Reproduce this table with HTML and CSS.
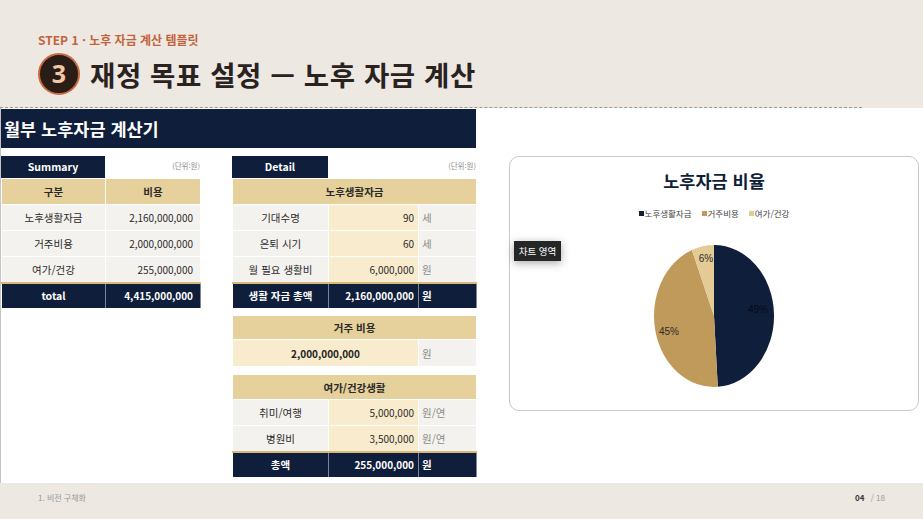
FILE: index.html
```html
<!DOCTYPE html>
<html lang="ko">
<head>
<meta charset="utf-8">
<title>재정 목표 설정 — 노후 자금 계산</title>
<link rel="stylesheet" href="styles.css">
</head>
<body>
<div class="page">
  <header class="head">
    <div class="step">STEP 1 · 노후 자금 계산 템플릿</div>
    <div class="title-row">
      <div class="num">3</div>
      <h1 class="title">재정 목표 설정 — 노후 자금 계산</h1>
    </div>
  </header>
  <div class="dash"></div>

  <main class="sheet">
    <div class="banner">월부 노후자금 계산기</div>
    <div class="content">
      <section class="tbl summary">
        <div class="cap"><div class="cap-title">Summary</div><div class="unit">(단위:원)</div></div>
        <table>
          <colgroup><col class="s1"><col class="s2"></colgroup>
          <tr class="gold"><th>구분</th><th>비용</th></tr>
          <tr class="row"><td class="c">노후생활자금</td><td class="r">2,160,000,000</td></tr>
          <tr class="row"><td class="c">거주비용</td><td class="r">2,000,000,000</td></tr>
          <tr class="row"><td class="c">여가/건강</td><td class="r">255,000,000</td></tr>
          <tr class="total"><td class="c">total</td><td class="r">4,415,000,000</td></tr>
        </table>
      </section>

      <section class="tbl detail">
        <div class="cap"><div class="cap-title">Detail</div><div class="unit">(단위:원)</div></div>
        <table>
          <colgroup><col class="d1"><col class="d2"><col class="d3"></colgroup>
          <tr class="gold"><th colspan="3">노후생활자금</th></tr>
          <tr class="row"><td class="c">기대수명</td><td class="r cream">90</td><td class="u">세</td></tr>
          <tr class="row"><td class="c">은퇴 시기</td><td class="r cream">60</td><td class="u">세</td></tr>
          <tr class="row"><td class="c">월 필요 생활비</td><td class="r cream">6,000,000</td><td class="u">원</td></tr>
          <tr class="total"><td class="c">생활 자금 총액</td><td class="r">2,160,000,000</td><td class="u">원</td></tr>
        </table>
        <table class="block2">
          <colgroup><col class="d1"><col class="d2"><col class="d3"></colgroup>
          <tr class="gold g2"><th colspan="3">거주 비용</th></tr>
          <tr class="row r2"><td colspan="2" class="c cream strong">2,000,000,000</td><td class="u">원</td></tr>
        </table>
        <table class="block3">
          <colgroup><col class="d1"><col class="d2"><col class="d3"></colgroup>
          <tr class="gold"><th colspan="3">여가/건강생활</th></tr>
          <tr class="row"><td class="c">취미/여행</td><td class="r cream">5,000,000</td><td class="u">원/연</td></tr>
          <tr class="row"><td class="c">병원비</td><td class="r cream">3,500,000</td><td class="u">원/연</td></tr>
          <tr class="total"><td class="c">총액</td><td class="r">255,000,000</td><td class="u">원</td></tr>
        </table>
      </section>

      <section class="chart">
        <div class="chart-title">노후자금 비율</div>
        <div class="legend">
          <span class="lg"><i class="sw navy"></i>노후생활자금</span>
          <span class="lg"><i class="sw tan"></i>거주비용</span>
          <span class="lg"><i class="sw light"></i>여가/건강</span>
        </div>
        <svg class="pie" width="120" height="143" viewBox="0 0 120 143">
          <path d="M60,71 L60,0 A60,71 0 0,1 63.77,141.86 Z" fill="#0f1e3b"/>
          <path d="M60,71 L63.77,141.86 A60,71 0 0,1 37.92,4.99 Z" fill="#c09a5a"/>
          <path d="M60,71 L37.92,4.99 A60,71 0 0,1 60,0 Z" fill="#e4cb96"/>
          <text x="104" y="68" class="pl dk">49%</text>
          <text x="15" y="90" class="pl">45%</text>
          <text x="52" y="17" class="pl">6%</text>
        </svg>
        <div class="tip">차트 영역</div>
      </section>
    </div>
  </main>

  <footer class="foot">
    <div class="crumb">1. 비전 구체화</div>
    <div class="pager"><b>04</b> <span>/ 18</span></div>
  </footer>
</div>
</body>
</html>
```

FILE: styles.css
```css
* { box-sizing: border-box; }
html, body { margin: 0; padding: 0; }
body {
  font-family: "Noto Sans CJK KR", "Noto Sans", sans-serif;
  background: #ede8e2;
}
.page {
  width: 923px;
  height: 519px;
  display: flex;
  flex-direction: column;
  overflow: hidden;
}
.head {
  height: 107px;
  padding: 32px 0 0 38px;
  background: #ede8e2;
}
.step {
  font-size: 12px;
  line-height: 16px;
  font-weight: 700;
  color: #c2643b;
}
.title-row {
  display: flex;
  align-items: center;
  margin-top: 5px;
}
.num {
  width: 42px;
  height: 42px;
  border-radius: 50%;
  background: #2a1c17;
  border: 2px solid #c86a3e;
  color: #f2c7a5;
  font-size: 25px;
  font-weight: 700;
  line-height: 37px;
  text-align: center;
  font-family: "Open Sans", "Noto Sans", sans-serif;
}
.title {
  margin: 0 0 0 10px;
  font-size: 27.5px;
  line-height: 34px;
  font-weight: 700;
  color: #2a221f;
  letter-spacing: 0.6px;
}
.dash {
  width: 862px;
  height: 1px;
  border-top: 1px dashed #9d9a96;
  background: #ede8e2;
}
.sheet {
  height: 375px;
  background: #fff;
  border-left: 1px solid #c4c4c4;
  padding-top: 1px;
}
.banner {
  width: 475px;
  height: 39px;
  background: #0f1e3a;
  color: #fff;
  font-size: 17.5px;
  font-weight: 700;
  line-height: 39px;
  padding-left: 3px;
}
.content {
  display: flex;
  align-items: flex-start;
  margin-top: 8px;
}
.tbl { font-size: 10.5px; color: #2b2b2b; }
.summary { width: 199px; }
.detail { width: 244px; margin-left: 32px; }
.cap {
  display: flex;
  align-items: flex-end;
  justify-content: space-between;
  height: 22px;
}
.cap-title {
  background: #0f1e3a;
  color: #fff;
  font-weight: 700;
  font-size: 10.5px;
  line-height: 22px;
  height: 22px;
  text-align: center;
}
.summary .cap-title { width: 104px; }
.detail .cap-title { width: 96px; }
.unit {
  font-size: 7.5px;
  color: #8a8a8a;
  align-self: center;
  margin-top: -4px;
}
table {
  width: 100%;
  border-collapse: collapse;
  table-layout: fixed;
}
col.s1 { width: 104px; }
col.s2 { width: 95px; }
col.d1 { width: 96px; }
col.d2 { width: 90px; }
col.d3 { width: 58px; }
th, td {
  padding: 0;
  border: 1px solid #fff;
  white-space: nowrap;
  overflow: hidden;
}
tr.gold th {
  background: #e6d09b;
  height: 26px;
  font-weight: 700;
  font-size: 10.5px;
  color: #2a2a2a;
}
tr.row td {
  background: #f4f2ee;
  height: 26px;
}
tr.row td.cream { background: #f9ebcd; }
td.c { text-align: center; }
td.r { text-align: right; padding-right: 4px; font-size: 10px; }
.summary td.r { padding-right: 7px; }
td.u { text-align: left; padding-left: 3px; color: #8a8a8a; }
td.strong { font-weight: 700; color: #222; font-size: 10px; }
tr.total td {
  background: #0f1e3a;
  color: #fff;
  font-weight: 700;
  height: 26px;
  border-top: 2px solid #d7b97c;
  border-right-color: #7c8597;
}
tr.total td.u { color: #fff; }
.block2 { margin-top: 6px; }
.block2 tr.g2 th { height: 24px; }
.block2 tr.r2 td { height: 27px; }
.block3 { margin-top: 7px; }
.block3 tr.gold th { height: 25px; }

.chart {
  position: relative;
  width: 410px;
  height: 255px;
  margin-left: 33px;
  border: 1px solid #c9c9c9;
  border-radius: 10px;
  background: #fff;
  display: flex;
  flex-direction: column;
  align-items: center;
  padding-top: 13px;
}
.chart-title {
  font-size: 17.5px;
  line-height: 22px;
  font-weight: 700;
  color: #0f1e3a;
}
.legend {
  margin-top: 15px;
  display: flex;
  gap: 10px;
  font-size: 8.5px;
  line-height: 12px;
  color: #444;
}
.lg { display: flex; align-items: center; }
.sw { display: inline-block; width: 5px; height: 5px; margin-right: 1px; }
.sw.navy { background: #0f1e3b; }
.sw.tan { background: #c09a5a; }
.sw.light { background: #e4cb96; }
.pie { margin-top: 26px; }
.pl {
  font-family: "Liberation Sans", Arial, sans-serif;
  font-size: 10px;
  fill: #2a2a2a;
  text-anchor: middle;
}
.pl.dk { fill: #050a14; }
.tip {
  position: absolute;
  left: 4px;
  top: 84px;
  width: 47px;
  height: 20px;
  background: #262626;
  color: #fff;
  font-size: 9.5px;
  line-height: 20px;
  text-align: center;
  box-shadow: 0 2px 8px rgba(0,0,0,0.35);
}
.foot {
  flex: 1;
  display: flex;
  justify-content: space-between;
  align-items: flex-start;
  padding: 10px 38px 0 38px;
  background: #ede8e2;
  font-size: 8px;
  line-height: 10px;
  color: #9a9a9a;
}
.pager b { color: #3a3a3a; font-weight: 700; }
.pager span { margin-left: 4px; }
```
